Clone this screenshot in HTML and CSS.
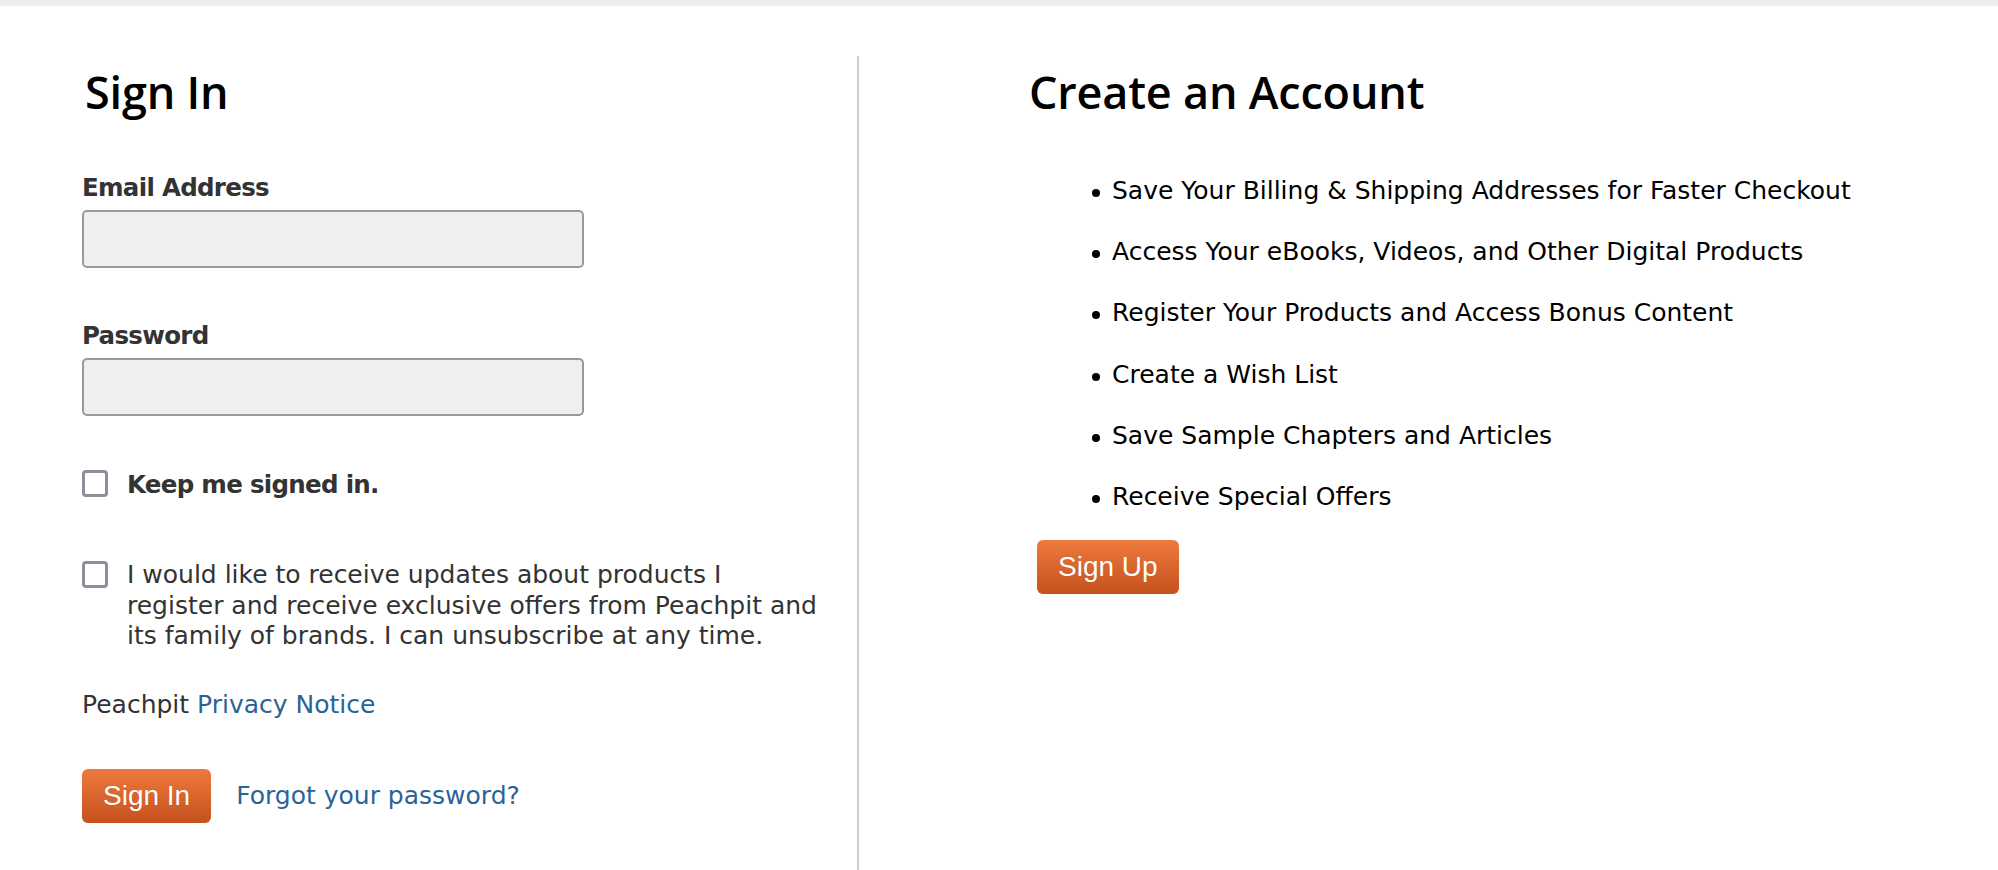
FILE: index.html
```html
<!DOCTYPE html>
<html lang="en">
<head>
<meta charset="utf-8">
<title>Sign In</title>
<link rel="stylesheet" href="styles.css">
</head>
<body>
<div class="topbar"></div>
<main class="panels">
  <section class="col col-signin">
    <h1 class="title">Sign In</h1>
    <form class="form">
      <div class="field">
        <label class="field-label" for="email">Email Address</label>
        <input class="text-input" id="email" type="email">
      </div>
      <div class="field">
        <label class="field-label" for="pw">Password</label>
        <input class="text-input" id="pw" type="password">
      </div>
      <label class="check check-keep"><input type="checkbox" class="box"><span class="check-text strong">Keep me signed in.</span></label>
      <label class="check check-optin"><input type="checkbox" class="box"><span class="check-text">I would like to receive updates about products I<br>register and receive exclusive offers from Peachpit and its family of brands. I can unsubscribe at any time.</span></label>
      <p class="privacy">Peachpit <a class="link" href="#">Privacy Notice</a></p>
      <div class="actions">
        <button type="button" class="btn">Sign In</button>
        <a class="link" href="#">Forgot your password?</a>
      </div>
    </form>
  </section>
  <section class="col col-create">
    <h1 class="title">Create an Account</h1>
    <ul class="benefits">
      <li>Save Your Billing &amp; Shipping Addresses for Faster Checkout</li>
      <li>Access Your eBooks, Videos, and Other Digital Products</li>
      <li>Register Your Products and Access Bonus Content</li>
      <li>Create a Wish List</li>
      <li>Save Sample Chapters and Articles</li>
      <li>Receive Special Offers</li>
    </ul>
    <button type="button" class="btn btn-signup">Sign Up</button>
  </section>
</main>
</body>
</html>
```
FILE: styles.css
```css
* { box-sizing: border-box; }
html, body { margin: 0; background: #fff; }
body {
  font-family: "DejaVu Sans", "Liberation Sans", sans-serif;
  font-size: 25px;
  line-height: 30px;
  color: #333;
}
.topbar { height: 6px; background: #eeeeee; }
.panels {
  display: grid;
  grid-template-columns: 857px 1fr;
  margin-top: 50px;
  min-height: 814px;
}
.col-signin { padding: 8px 0 0 82px; }
.col-create { border-left: 2px solid #cccccc; padding: 8px 0 0 167px; }
.title {
  font-family: "Open Sans", sans-serif;
  font-weight: 600;
  font-size: 45px;
  letter-spacing: -0.2px;
  line-height: 56px;
  margin: 0 0 0 3px;
  color: #000;
}
.form { display: flex; flex-direction: column; align-items: flex-start; }
.field { margin-top: 53px; display: flex; flex-direction: column; }
.field-label { font-size: 24.5px; font-weight: bold; letter-spacing: -0.7px; color: #333; }
.text-input {
  appearance: none;
  margin: 7px 0 0;
  width: 502px;
  height: 58px;
  border: 2px solid #999;
  border-radius: 5px;
  background: #efefef;
}
.check { display: flex; align-items: flex-start; gap: 19px; }
.check-keep { margin-top: 54px; }
.check-optin { margin-top: 60px; line-height: 30.6px; }
.check-optin .box { margin-top: 1px; }
.check-text { width: 716px; }
.check-keep .check-text { width: auto; }
.strong { font-size: 24.5px; font-weight: bold; letter-spacing: -0.7px; }
.box {
  appearance: none;
  margin: 0;
  flex: none;
  width: 26px;
  height: 27px;
  border: 3px solid #8e8e9b;
  border-radius: 4px;
  background: #fff;
}
.privacy { margin: 38px 0 0; }
.link { color: #2a6496; text-decoration: none; }
.actions { margin-top: 49px; display: flex; align-items: center; gap: 25px; }
.btn {
  font-family: "Liberation Sans", Arial, sans-serif;
  font-size: 28px;
  color: #fff;
  height: 54px;
  padding: 0 21px;
  border: 0;
  border-radius: 6px;
  background: linear-gradient(#ee7a3e, #c5511e);
  text-shadow: 0 0 1px rgba(0,0,0,0.15);
}
.benefits {
  margin: 56px 0 0;
  padding: 0 0 0 66px;
  list-style: none;
  color: #000;
}
.benefits li { margin-bottom: 31.2px; }
.benefits li:last-child { margin-bottom: 0; }
.benefits li::before {
  content: "";
  display: inline-block;
  width: 8px;
  height: 8px;
  border-radius: 50%;
  background: #000;
  margin-right: 12px;
  vertical-align: 2px;
}
.btn-signup { margin: 28px 0 0 11px; }
```
